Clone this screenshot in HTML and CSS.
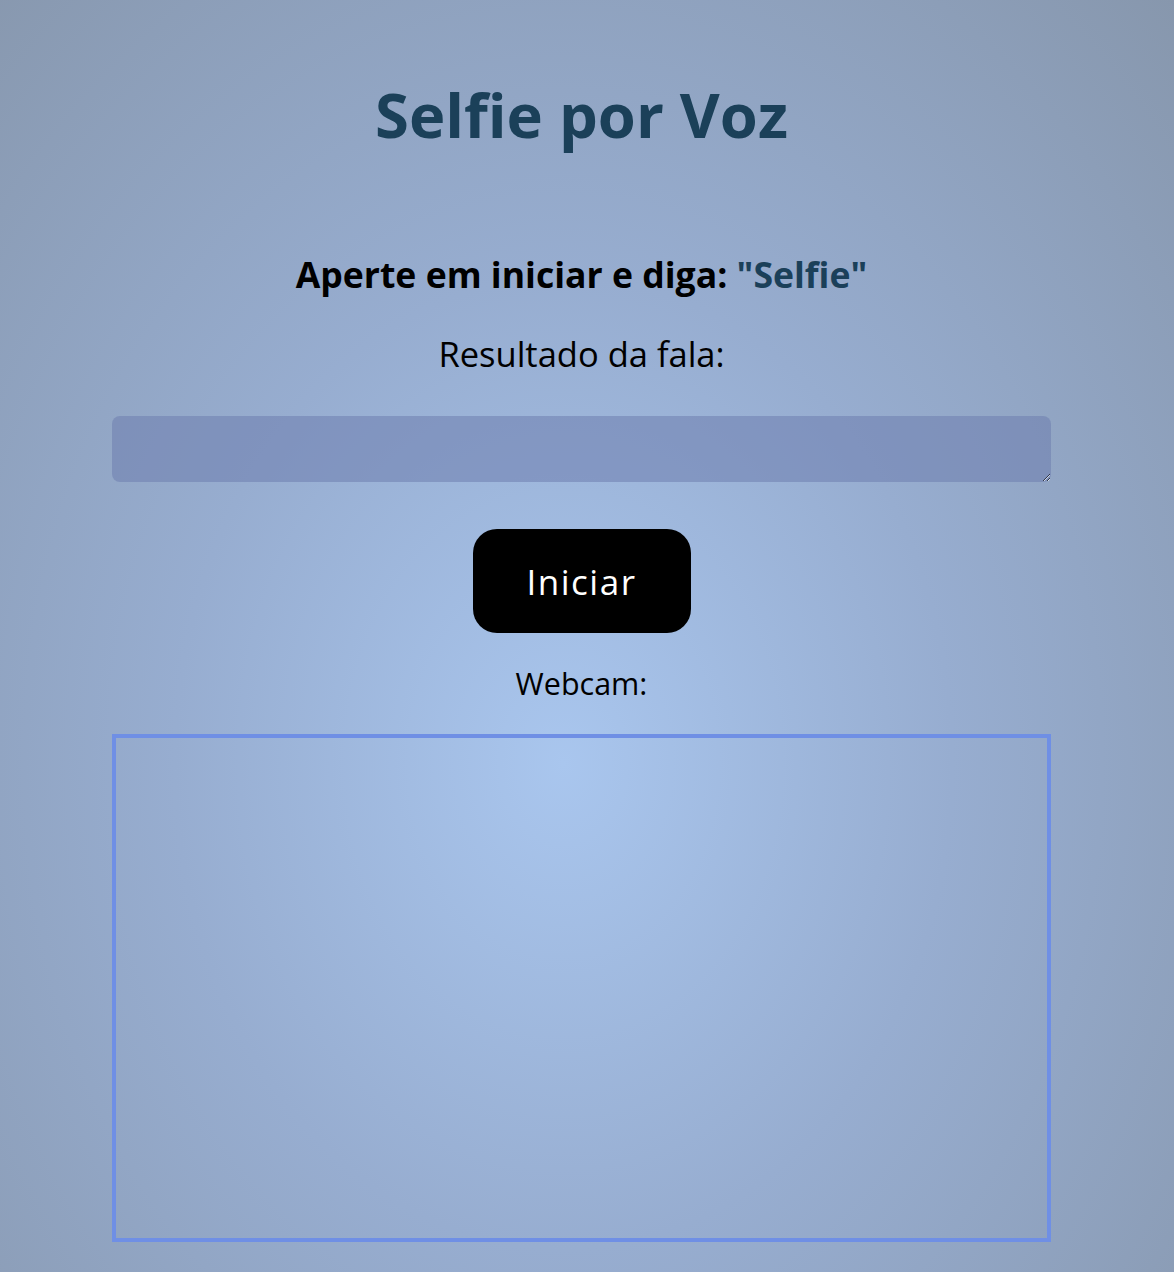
FILE: index.html
```html
<!DOCTYPE html>
<html lang="pt">
<head>
<meta charset="utf-8">
<title>Selfie por Voz</title>
<link rel="stylesheet" href="styles.css">
</head>
<body>
<main class="page">
  <h1 class="title">Selfie por Voz</h1>
  <h2 class="instruction">Aperte em iniciar e diga: <span class="keyword">"Selfie"</span></h2>
  <p class="label label-result">Resultado da fala:</p>
  <textarea class="result" aria-label="Resultado da fala"></textarea>
  <button class="start" type="button">Iniciar</button>
  <p class="label label-webcam">Webcam:</p>
  <div class="webcam"></div>
</main>
</body>
</html>
```

FILE: styles.css
```css
html, body {
  margin: 0;
  padding: 0;
  height: 100%;
}

body {
  background: radial-gradient(ellipse at 48% 60%, #a9c6ee 0%, #97add0 45%, #8797ad 100%);
  font-family: "Open Sans", "DejaVu Sans", sans-serif;
  color: #000;
  overflow: hidden;
}

.page {
  display: flex;
  flex-direction: column;
  align-items: center;
  padding: 74px 11px 0 0;
  text-align: center;
}

.title {
  margin: 0;
  font-size: 61.5px;
  line-height: 80px;
  font-weight: 700;
  color: #1b4059;
}

.instruction {
  margin: 98px 0 0;
  font-size: 35.6px;
  line-height: 44px;
  font-weight: 700;
}

.keyword {
  color: #1b4059;
}

.label {
  margin: 0;
  line-height: 40px;
  font-weight: 400;
}

.label-result {
  margin-top: 38px;
  font-size: 34.5px;
}

.result {
  margin-top: 42px;
  width: 939px;
  height: 66px;
  box-sizing: border-box;
  border: none;
  border-radius: 8px;
  background: rgba(110, 125, 175, 0.55);
  resize: vertical;
  padding: 8px;
  font-family: inherit;
}

.start {
  margin-top: 47px;
  width: 218px;
  height: 104px;
  border: none;
  border-radius: 24px;
  background: #000;
  color: #fff;
  font-family: inherit;
  font-size: 35px;
  letter-spacing: 1.5px;
  cursor: pointer;
}

.label-webcam {
  margin-top: 30px;
  font-size: 30.5px;
}

.webcam {
  margin-top: 31px;
  width: 939px;
  height: 508px;
  box-sizing: border-box;
  border: 4px solid #6f8fe5;
}
```
